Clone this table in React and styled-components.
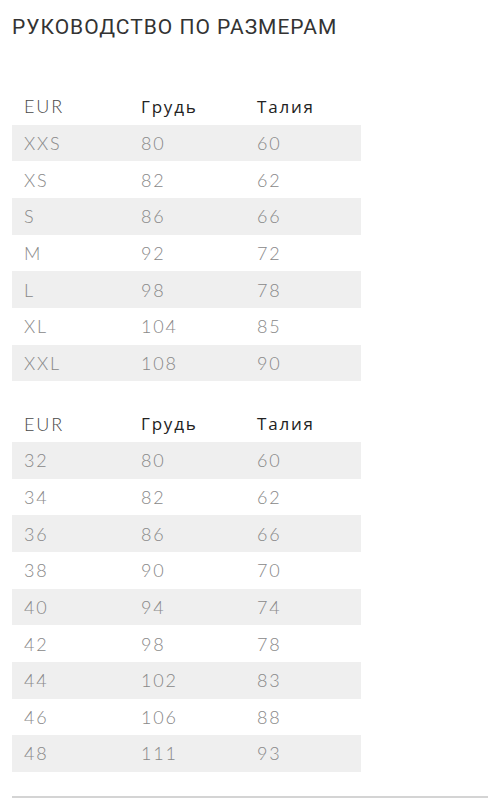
import React from "react";
import styled, { createGlobalStyle } from "styled-components";

const GlobalStyle = createGlobalStyle`
  body {
    margin: 0;
    background: #ffffff;
    font-family: "Lato", "Open Sans", sans-serif;
  }
`;

const letters = [
  ["XXS", "80", "60"],
  ["XS", "82", "62"],
  ["S", "86", "66"],
  ["M", "92", "72"],
  ["L", "98", "78"],
  ["XL", "104", "85"],
  ["XXL", "108", "90"],
];

const numbers = [
  ["32", "80", "60"],
  ["34", "82", "62"],
  ["36", "86", "66"],
  ["38", "90", "70"],
  ["40", "94", "74"],
  ["42", "98", "78"],
  ["44", "102", "83"],
  ["46", "106", "88"],
  ["48", "111", "93"],
];

const SizeTable = ({ rows }) => (
  <Table>
    <HeadRow>
      <HeadCell>EUR</HeadCell>
      <HeadCell $dark>Грудь</HeadCell>
      <HeadCell $dark>Талия</HeadCell>
    </HeadRow>
    {rows.map((row, i) => (
      <Row key={row[0]} $shaded={i % 2 === 0}>
        {row.map((value, j) => (
          <Cell key={j}>{value}</Cell>
        ))}
      </Row>
    ))}
  </Table>
);

const App = () => {
  return (
    <Page>
      <GlobalStyle />
      <Title>Руководство по размерам</Title>
      <Tables>
        <SizeTable rows={letters} />
        <SizeTable rows={numbers} />
      </Tables>
      <Divider />
    </Page>
  );
};

const Page = styled.div`
  padding: 14px 7px 0 12px;
`;

const Title = styled.h1`
  margin: 0;
  font-family: "Roboto", sans-serif;
  font-size: 21px;
  font-weight: 400;
  line-height: 26px;
  letter-spacing: 1px;
  text-transform: uppercase;
  color: #333;
`;

const Tables = styled.div`
  display: flex;
  flex-direction: column;
  gap: 24px;
  margin-top: 48px;
`;

const Table = styled.div`
  width: 349px;
  display: flex;
  flex-direction: column;
`;

const Row = styled.div`
  display: grid;
  grid-template-columns: 117px 116px 116px;
  height: 36.67px;
  align-items: center;
  background: ${({ $shaded }) => ($shaded ? "#efefef" : "transparent")};
`;

const HeadRow = styled(Row)`
  background: transparent;
`;

const Cell = styled.div`
  padding-left: 12px;
  font-size: 18px;
  font-weight: 300;
  letter-spacing: 1.8px;
  color: #888;
`;

const HeadCell = styled.div`
  padding-left: 12px;
  font-family: ${({ $dark }) => ($dark ? '"Open Sans", sans-serif' : '"Lato", sans-serif')};
  font-size: ${({ $dark }) => ($dark ? "17px" : "18px")};
  font-weight: ${({ $dark }) => ($dark ? 500 : 300)};
  letter-spacing: 1.8px;
  color: ${({ $dark }) => ($dark ? "#222" : "#4a4a4a")};
`;

const Divider = styled.div`
  margin-top: 24px;
  height: 2px;
  background: #d4d4d4;
`;

export default App;
